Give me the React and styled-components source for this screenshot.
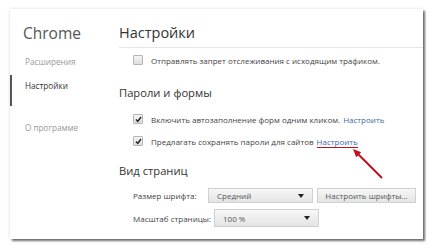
import styled, { createGlobalStyle } from "styled-components";

const GlobalStyle = createGlobalStyle`
  html, body {
    margin: 0;
    background: #ffffff;
  }
  body {
    font-family: "Open Sans", "Noto Sans", sans-serif;
    color: #333;
  }
`;

const Page = styled.div`
  width: 434px;
  height: 250px;
  padding: 9px 0 0 10px;
  box-sizing: border-box;
`;

const Panel = styled.div`
  position: relative;
  width: 413px;
  height: 230px;
  background: #fff;
  box-shadow: 2px 2px 2px rgba(0, 0, 0, 0.55), 0 0 3px rgba(0, 0, 0, 0.15);
  display: grid;
  grid-template-columns: 109px 1fr;
`;

const Nav = styled.div`
  display: flex;
  flex-direction: column;
  padding-top: 14px;
`;

const Brand = styled.div`
  font-size: 15.5px;
  color: #555;
  padding-left: 13px;
  height: 20px;
  line-height: 20px;
  margin-bottom: 9px;
`;

const NavItem = styled.div`
  font-size: 8.2px;
  color: ${(p) => (p.active ? "#333" : "#999")};
  border-left: 2px solid ${(p) => (p.active ? "#555" : "transparent")};
  padding: ${(p) => (p.active ? "5px 0 15px 13px" : "4px 0 4px 13px")};
  margin-top: ${(p) => p.gap || 0}px;
`;

const Main = styled.div`
  display: flex;
  flex-direction: column;
`;

const PageTitle = styled.div`
  font-size: 14.5px;
  color: #333;
  height: 24px;
  line-height: 24px;
  margin-top: 12px;
  padding-bottom: 2px;
  border-bottom: 1px solid #e6e6e6;
`;

const SectionTitle = styled.div`
  font-size: 11.2px;
  color: #333;
  margin-top: ${(p) => p.top}px;
  height: 16px;
  line-height: 16px;
`;

const Row = styled.div`
  display: flex;
  align-items: center;
  gap: 8px;
  padding-left: 14px;
  margin-top: ${(p) => p.top}px;
  height: 14px;
  font-size: 8px;
  color: #444;
  white-space: nowrap;
`;

const Box = styled.span`
  width: 8px;
  height: 8px;
  border: 1px solid #b5b5b5;
  border-radius: 1px;
  background: linear-gradient(#f6f6f6, #dedede);
  display: inline-flex;
  align-items: center;
  justify-content: center;
  flex: none;
`;

const Link = styled.span`
  color: #3a65a8;
  margin-left: 3px;
`;

const MarkedLink = styled.span`
  color: #3a65a8;
  margin-left: 3px;
  border-bottom: 1.5px solid #b8142a;
  line-height: 11px;
`;

const FieldRow = styled.div`
  display: flex;
  align-items: center;
  padding-left: 14px;
  margin-top: ${(p) => p.top}px;
  font-size: 8px;
  color: #444;
  white-space: nowrap;
`;

const Label = styled.span`
  width: ${(p) => p.w}px;
  flex: none;
`;

const Select = styled.div`
  width: ${(p) => p.w}px;
  height: ${(p) => p.h}px;
  box-sizing: border-box;
  border: 1px solid #d0d0d0;
  background: linear-gradient(#f7f7f7, #e4e4e4);
  display: flex;
  align-items: center;
  justify-content: space-between;
  padding: 0 8px 0 8px;
  color: #555;
  font-size: 8px;
`;

const Arrow = styled.span`
  width: 0;
  height: 0;
  border-left: 3.5px solid transparent;
  border-right: 3.5px solid transparent;
  border-top: 4px solid #222;
`;

const Button = styled.div`
  margin-left: 4px;
  width: 99px;
  height: 15px;
  box-sizing: border-box;
  border: 1px solid #d0d0d0;
  background: linear-gradient(#f7f7f7, #e4e4e4);
  display: flex;
  align-items: center;
  justify-content: center;
  color: #555;
  font-size: 8px;
`;

const Pointer = styled.svg`
  position: absolute;
  left: 330px;
  top: 125px;
  pointer-events: none;
`;

const Check = () => (
  <svg width="7" height="7" viewBox="0 0 7 7">
    <path d="M1 3.6 L2.8 5.5 L6 1" fill="none" stroke="#222" strokeWidth="1.4" />
  </svg>
);

export default function App() {
  return (
    <>
      <GlobalStyle />
      <Page>
        <Panel>
          <Nav>
            <Brand>Chrome</Brand>
            <NavItem>Расширения</NavItem>
            <NavItem active gap={4}>Настройки</NavItem>
            <NavItem gap={12}>О программе</NavItem>
          </Nav>
          <Main>
            <PageTitle>Настройки</PageTitle>
            <Row top={5}>
              <Box />
              Отправлять запрет отслеживания с исходящим трафиком.
            </Row>
            <SectionTitle top={18}>Пароли и формы</SectionTitle>
            <Row top={11}>
              <Box>
                <Check />
              </Box>
              <span>
                Включить автозаполнение форм одним кликом.
                <Link>Настроить</Link>
              </span>
            </Row>
            <Row top={8}>
              <Box>
                <Check />
              </Box>
              <span>
                Предлагать сохранять пароли для сайтов
                <MarkedLink>Настроить</MarkedLink>
              </span>
            </Row>
            <SectionTitle top={15}>Вид страниц</SectionTitle>
            <FieldRow top={9}>
              <Label w={75}>Размер шрифта:</Label>
              <Select w={105} h={15}>
                Средний
                <Arrow />
              </Select>
              <Button>Настроить шрифты...</Button>
            </FieldRow>
            <FieldRow top={6}>
              <Label w={81}>Масштаб страницы:</Label>
              <Select w={105} h={18}>
                100 %
                <Arrow />
              </Select>
            </FieldRow>
          </Main>
          <Pointer width="45" height="50" viewBox="0 0 45 50">
            <path d="M42 44 L18 20" stroke="#c0101e" strokeWidth="2" fill="none" />
            <path d="M13 15 L16.2 23.2 L21.2 18.2 Z" fill="#c0101e" />
          </Pointer>
        </Panel>
      </Page>
    </>
  );
}
